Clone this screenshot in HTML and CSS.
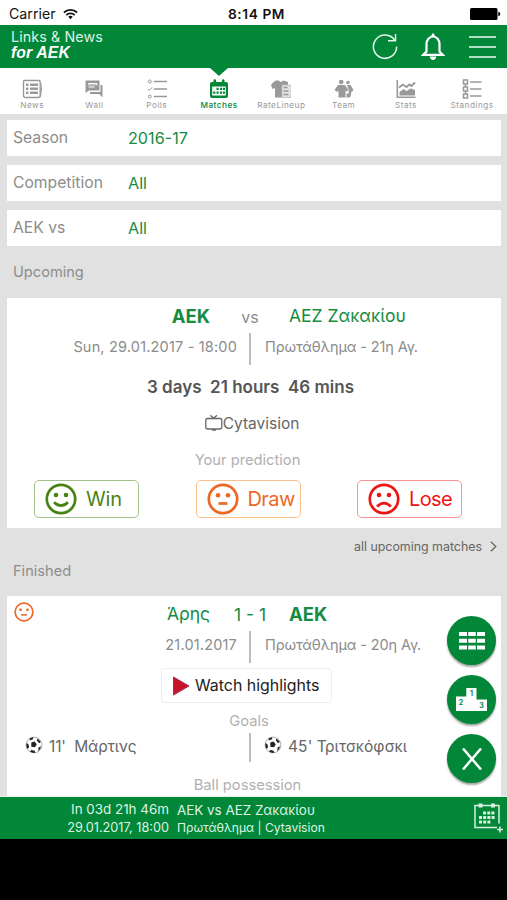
FILE: index.html
```html
<!DOCTYPE html>
<html lang="en">
<head>
<meta charset="utf-8">
<title>Links &amp; News for AEK</title>
<link rel="stylesheet" href="styles.css">
</head>
<body>
<div class="app">
  <div class="status">
    <div class="carrier"><span>Carrier</span>
      <svg width="15" height="12" viewBox="0 0 16 12" fill="none" stroke="#111" stroke-width="1.9"><path d="M1 4.400a10 10 0 0 1 14 0M3.500 7.100a6.400 6.400 0 0 1 9 0"/><path d="M5.600 9a3.600 3.600 0 0 1 4.800 0L8 11.700z" fill="#111" stroke="none"/></svg>
    </div>
    <div class="clock">8:14 PM</div>
    <svg class="battery" width="31" height="12" viewBox="0 0 31 12"><rect width="27.500" height="12" rx="1.500"/><path d="M28.300 3.800q2 .3 2 2.200t-2 2.200z"/></svg>
  </div>

  <header class="header">
    <div class="brand"><span class="brand-top">Links &amp; News</span><span class="brand-team">for AEK</span></div>
    <svg width="26" height="27" viewBox="0 0 26 27" fill="none" stroke="#e4f5e9" stroke-width="1.500"><path d="M22.800 7.500A11.600 11.600 0 1 0 24.600 13.600"/><path d="M23.500 1v6.800h-7.500"/></svg>
    <svg class="bell" width="24" height="29" viewBox="0 0 24 29"><path d="M5.500 19.500V12a6.500 7.500 0 0 1 13 0v7.500l3.300 3.400H2.200z" fill="none" stroke="#fff" stroke-width="2.200"/><path d="M9.500 4.500 12 .8l2.500 3.700zM8.800 24.500h6.400c0 2-1.500 3.500-3.200 3.500s-3.200-1.500-3.200-3.500z" fill="#fff"/></svg>
    <svg class="menu" width="27" height="24" viewBox="0 0 27 24" stroke="#effaf2" stroke-width="1.700"><path d="M0 2h27M0 12h27M0 22h27"/></svg>
  </header>

  <nav class="tabs">
    <div class="tab"><svg viewBox="0 0 20 20"><path d="M2.500 1.500h14.200a1.500 1.500 0 0 1 1.500 1.500v13.500a2 2 0 0 1-2 2H3.500a2 2 0 0 1-2-2v-14q0-1 1-1z" fill="none" stroke="currentColor" stroke-width="1.400"/><path d="M18.500 4.500l1.600 1-1.600 12" fill="none" stroke="currentColor"/><path d="M4 4.500h2.500V7H4zM8 4.500h8V7H8zM4 8.500h2.500V11H4zM8 8.500h8V11H8zM4 12.500h2.500V15H4zM8 12.500h8V15H8z" fill="currentColor"/></svg><span>News</span></div>
    <div class="tab"><svg viewBox="0 0 20 20"><path d="M2 1.500h13.500v10H5L1.500 14V2z" fill="currentColor"/><path d="M4.500 4.500h8.500v1.300H4.500zM4.500 8h6" stroke="#fff" stroke-width="1"/><path d="M16.500 6H18q.5 0 .5.600V18.500L15.200 15H6v-2h10.500z" fill="currentColor"/></svg><span>Wall</span></div>
    <div class="tab"><svg viewBox="0 0 20 20" fill="none" stroke="currentColor"><path d="M7.500 2.500h12M7.500 10h12M7.500 17.500h12" stroke-width="1.700" stroke-linecap="round"/><circle cx="2.800" cy="2.500" r="1.500"/><circle cx="2.800" cy="17.500" r="1.500"/><path d="M1 10l1.500 1.300L5 8.500"/></svg><span>Polls</span></div>
    <div class="tab active"><svg viewBox="0 0 20 20"><path d="M3 3h1.500V1.500a1.200 1.200 0 0 1 2.600 0V3h5.800V1.500a1.200 1.200 0 0 1 2.600 0V3h1.500a2 2 0 0 1 2 2v12a2 2 0 0 1-2 2H3a2 2 0 0 1-2-2V5a2 2 0 0 1 2-2z" fill="currentColor"/><path d="M3.200 7.500h13.600v9H3.200z" fill="#fff"/><path d="M7.500 8.800h2.200V11H7.500zM11 8.800h2.200V11H11zM14 8.800h2V11h-2zM4.200 12.500h2.200v2.200H4.200zM7.500 12.500h2.200v2.200H7.500zM11 12.500h2.200v2.200H11zM14 12.500h2v2.200h-2z" fill="currentColor"/></svg><span>Matches</span></div>
    <div class="tab"><svg viewBox="0 0 20 20"><path d="M5 1.500h2.500L10 3l2.500-1.500L17 3v3h-5v12.500H4V9L1.500 10 0 6q1.500-3 5-4.500z" fill="currentColor"/><path d="M11 6h8l1 1.500v11h-9z" fill="#e4e4e4" stroke="#bbb" stroke-width=".8"/><path d="M12.500 8.500h4M12.500 12h5M12.500 15.500h5" stroke="currentColor" stroke-width="1.500"/></svg><span>RateLineup</span></div>
    <div class="tab"><svg viewBox="0 0 20 20" fill="currentColor"><circle cx="7.200" cy="3" r="2.300"/><circle cx="14" cy="3.500" r="1.800"/><path d="M4 6h7l3.500 5-2 1.500-1-1V18.500H4.500V11.500l-1.500 1.500L.5 11z"/><path d="M13 6h3.500l3 5-1.800 2-.5-.5v2.500l-1.200 3.500H12.500v-4h2.200v-4z"/></svg><span>Team</span></div>
    <div class="tab"><svg viewBox="0 0 20 20"><path d="M1.300 1v17.300H19.500" fill="none" stroke="currentColor" stroke-width="1.600"/><path d="M3.500 13l4-3 3 2 4-2.500 4.500 1.500v5.500H3.500z" fill="currentColor"/><path d="M3 8.500l4-3L10.500 8l3-2.500 2 1.500L19 3.500" fill="none" stroke="currentColor" stroke-width="1.800"/></svg><span>Stats</span></div>
    <div class="tab"><svg viewBox="0 0 20 20" fill="none" stroke="currentColor"><path d="M8 3h11.500M8 10h11.500M8 17h11.500" stroke-width="1.500"/><path d="M1.500 1h4v4h-4zM1.500 8h4v4h-4zM1.500 15h4v4h-4zM3.500 5v3M3.500 12v3" stroke-width="1.600"/></svg><span>Standings</span></div>
  </nav>

  <main class="content">
    <div class="filter"><span class="key">Season</span><span class="value">2016-17</span></div>
    <div class="filter"><span class="key">Competition</span><span class="value">All</span></div>
    <div class="filter"><span class="key">AEK vs</span><span class="value">All</span></div>

    <h2 class="section">Upcoming</h2>
    <section class="card upcoming">
      <div class="teams"><b class="home">AEK</b><span class="versus">vs</span><span class="away">ΑΕΖ Ζακακίου</span></div>
      <div class="info"><span class="when">Sun, 29.01.2017 - 18:00</span><i class="rule"></i><span class="league">Πρωτάθλημα - 21η Αγ.</span></div>
      <div class="countdown">3 days&nbsp; 21 hours&nbsp; 46 mins</div>
      <div class="tv"><svg width="18" height="16" viewBox="0 0 18 16" fill="none" stroke="#666" stroke-width="1.300"><rect x=".8" y="3.500" width="16" height="10.500" rx="1.800"/><path d="M5.500.3l3 3L12 .3M7 15h4"/></svg><span>Cytavision</span></div>
      <div class="caption prediction">Your prediction</div>
      <div class="votes">
        <div class="vote win"><svg class="face" viewBox="0 0 32 32"><circle cx="16" cy="16" r="14.200"/><path d="M9 19.200q7 6.800 14 0"/><circle class="eye" cx="11" cy="12" r="2.300"/><circle class="eye" cx="21" cy="12" r="2.300"/></svg><span>Win</span></div>
        <div class="vote draw"><svg class="face" viewBox="0 0 32 32"><circle cx="16" cy="16" r="14.200"/><path d="M11.500 20.500h9"/><circle class="eye" cx="11" cy="12.300" r="2.300"/><circle class="eye" cx="21" cy="12.300" r="2.300"/></svg><span>Draw</span></div>
        <div class="vote lose"><svg class="face" viewBox="0 0 32 32"><circle cx="16" cy="16" r="14.200"/><path d="M9 23.500q7-6.800 14 0"/><circle class="eye" cx="11" cy="12" r="2.300"/><circle class="eye" cx="21" cy="12" r="2.300"/></svg><span>Lose</span></div>
      </div>
    </section>

    <div class="more"><span>all upcoming matches</span><svg width="7" height="11" viewBox="0 0 7 11" fill="none" stroke="#666" stroke-width="1.300"><path d="M.8.7l5 4.800-5 4.800"/></svg></div>
    <h2 class="section fin">Finished</h2>

    <section class="card finished">
      <svg class="face mini" viewBox="0 0 32 32"><circle cx="16" cy="16" r="14.200"/><path d="M11.500 20.500h9"/><circle class="eye" cx="10.500" cy="12.500" r="2.300"/><circle class="eye" cx="21.500" cy="12.500" r="2.300"/></svg>
      <div class="teams"><span class="home">Άρης</span><span class="score">1 - 1</span><b class="away">AEK</b></div>
      <div class="info"><span class="when">21.01.2017</span><i class="rule"></i><span class="league">Πρωτάθλημα - 20η Αγ.</span></div>
      <div class="watch"><svg width="18" height="20" viewBox="0 0 18 20"><path d="M1.500 1v18L17 10z" fill="#c8142b" stroke="#a5324a"/></svg><span>Watch highlights</span></div>
      <div class="caption goals-title">Goals</div>
      <div class="goals">
        <div class="goal"><svg class="ball" viewBox="0 0 18 18"><circle cx="9" cy="9" r="7.900" fill="#fff" stroke="#999" stroke-width=".8"/><path d="M6.300 6.500L9.500 5.500l2.300 2.800-1.800 3-3.700-.5zM4.500 2.400l3.500-1.100L8.300 3 5 4.500zM12.500 2.400l3.300 3.300-1.500 1.500-2.500-2.700zM1.300 7.500l1.900.3.900 3.200L2.800 13Q1 11 1.300 7.500zM6.200 14l3.500.8.400 2q-2.600.4-5-1.200zM13.500 11.500l2.500-1.300q0 2.200-2.700 5z" fill="#222"/></svg><span class="martins">11'&nbsp; Μάρτινς</span></div>
        <i class="rule"></i>
        <div class="goal guest"><svg class="ball" viewBox="0 0 18 18"><circle cx="9" cy="9" r="7.900" fill="#fff" stroke="#999" stroke-width=".8"/><path d="M6.300 6.500L9.500 5.500l2.300 2.800-1.800 3-3.700-.5zM4.500 2.400l3.500-1.100L8.300 3 5 4.500zM12.500 2.400l3.300 3.300-1.500 1.500-2.500-2.700zM1.300 7.500l1.900.3.900 3.200L2.800 13Q1 11 1.300 7.500zM6.200 14l3.500.8.400 2q-2.600.4-5-1.200zM13.500 11.500l2.500-1.300q0 2.200-2.700 5z" fill="#222"/></svg><span class="trick">45' Τριτσκόφσκι</span></div>
      </div>
      <div class="caption possession">Ball possession</div>
    </section>
  </main>

  <footer class="footer">
    <div class="next-time"><span class="in">In 03d 21h 46m</span><span class="date">29.01.2017, 18:00</span></div>
    <div class="next-match"><span class="pair">AEK vs ΑΕΖ Ζακακίου</span><span class="where">Πρωτάθλημα | Cytavision</span></div>
    <svg class="calendar" width="32" height="32" viewBox="0 0 32 32" fill="none" stroke="#d9f0df" stroke-width="1.500"><path d="M27 22.500V4.500H3v22h22M28 25.500v6M25 28.500h6"/><path d="M6.500 4.500h4M19 4.500h4" stroke-width="4"/><path d="M11 12h3m1.200 0h3m1.200 0h3M7 16.500h3m1.200 0h3m1.200 0h3m1.200 0h3M7 21h3m1.200 0h3m1.200 0h3" stroke-width="3"/></svg>
  </footer>

  <div class="fabs">
    <div class="fab"><svg width="26" height="18" viewBox="0 0 26 18" fill="#fff"><path d="M0 0h8v4H0zM9.200 0h7.600v4H9.200zM18 0h8v4h-8zM0 6.700h8v4H0zM9.200 6.700h7.600v4H9.200zM18 6.700h8v4h-8zM0 13.400h8v4H0zM9.200 13.400h7.600v4H9.200zM18 13.400h8v4h-8z"/></svg></div>
    <div class="fab"><svg width="31" height="23" viewBox="0 0 31 23"><path d="M0 8.500h10.300V0h10.200v11.500H31V23H0z" fill="#fff"/><g class="podium"><text x="5" y="17">2</text><text x="15.500" y="8">1</text><text x="25.500" y="20">3</text></g></svg></div>
    <div class="fab"><svg width="20" height="22" viewBox="0 0 20 22" stroke="#fff" stroke-width="2.500"><path d="M1 .5l18 21M19 .5L1 21.500"/></svg></div>
  </div>
</div>
</body>
</html>
```

FILE: styles.css
```css
* { box-sizing: border-box; }
body { margin: 0; background: #000; font-family: Inter, "Liberation Sans", sans-serif; color: #8c8c8c; }
.app { position: relative; width: 507px; height: 900px; overflow: hidden; display: flex; flex-direction: column; }
span, b, .clock, .countdown, .caption, h2 { white-space: nowrap; }
svg { flex: none; display: block; }

.status { height: 25px; background: #fff; display: grid; grid-template-columns: 1fr auto 1fr; align-items: center; padding: 2px 6px 0 9px; color: #111; }
.carrier { display: flex; align-items: center; gap: 7px; font-size: 14.2px; }
.clock { font-size: 13.7px; font-weight: 600; letter-spacing: .6px; padding-left: 3px; }
.battery { justify-self: end; }

.header { height: 43px; background: #028739; display: flex; align-items: center; padding: 0 11px; }
.brand { flex: 1; display: flex; flex-direction: column; color: #fff; padding-bottom: 2px; }
.brand-top { font-size: 14.3px; line-height: 14px; color: #dff3e5; letter-spacing: .1px; }
.brand-team { font: italic bold 15.8px/18px "Liberation Sans", sans-serif; letter-spacing: .1px; }
.bell { margin-left: 23px; }
.menu { margin-left: 24px; }

.tabs { position: relative; height: 46px; background: #fff; display: grid; grid-template-columns: repeat(7, 62.300px) 1fr; padding-left: 1px; }
.tab { display: flex; flex-direction: column; align-items: center; padding-top: 11px; color: #999; font-size: 8.2px; letter-spacing: .5px; line-height: 13px; }
.tab svg { width: 20px; height: 20px; }
.tab.active { color: #028739; }
.tab.active span { font-weight: 500; }
.tab.active::before { content: ""; position: absolute; top: 0; left: 210px; border: 9px solid transparent; border-top: 8px solid #028739; border-bottom: 0; }

.content { height: 682px; background: #e1e1e1; padding: 6px 6px 0 7px; overflow: hidden; }
.filter { height: 36px; background: #fff; margin-bottom: 9px; padding-left: 6px; display: grid; grid-template-columns: 115px 1fr; line-height: 35px; font-size: 15.7px; }
.value { color: #158c42; font-size: 16.2px; line-height: 36px; }
.section { margin: 0; padding-left: 6px; font-weight: 400; font-size: 14.6px; line-height: 34px; height: 43px; }
.card { background: #fff; }
.upcoming { height: 230px; }
.teams { height: 35px; display: grid; grid-template-columns: 203px 79px 1fr; align-items: center; font-size: 17.5px; padding-top: 0; }
.home, .away { color: #158c42; }
b { font-weight: 700; color: #028739; font-size: 18.400px; }
.home { justify-self: end; }
.versus, .score { justify-self: center; padding-left: 1px; padding-top: 2px; }
.versus { font-size: 16px; }
.score { color: #158c42; }
.info { height: 32px; display: grid; grid-template-columns: 230px 28px 1fr; align-items: center; font-size: 14.5px; }
.when { justify-self: end; padding-bottom: 6px; letter-spacing: .18px; }
.league { padding-bottom: 6px; letter-spacing: -.12px; }
.rule { width: 2px; height: 32px; background: #bdbdbd; justify-self: center; margin-right: 3px; }
.countdown { text-align: center; padding-right: 7px; font-size: 17px; font-weight: 600; color: #555; line-height: 45px; height: 44px; }
.tv { height: 28px; display: flex; align-items: center; justify-content: center; padding-right: 4px; font-size: 15.5px; color: #666; }
.caption { text-align: center; color: #b0b0b0; font-size: 14.7px; padding-right: 13px; }
.prediction { line-height: 46px; height: 43px; }
.votes { display: grid; grid-template-columns: repeat(3, 105px); column-gap: 56.500px; padding-left: 27px; }
.vote { height: 38px; border: 1px solid; border-radius: 5px; display: flex; align-items: center; padding-left: 10px; gap: 9px; font-size: 20px; letter-spacing: -.6px; }
.face { width: 32px; height: 32px; margin-top: -1px; fill: none; stroke: currentColor; stroke-width: 2.7; }
.face .eye { fill: currentColor; stroke: none; }
.win { color: #498315; border-color: #a4c18b; letter-spacing: -.2px; }
.draw { color: #ed6826; border-color: #fac18c; }
.lose { color: #f01515; border-color: #fa9292; }
.more { height: 37px; display: flex; justify-content: flex-end; align-items: center; gap: 8px; padding-right: 4px; color: #666; font-size: 12.4px; }
.fin { height: 31px; line-height: 12px; }
.finished { height: 200px; position: relative; }
.mini { position: absolute; left: 7px; top: 6px; margin: 0; width: 20px; height: 20px; color: #ed6826; }
.watch { width: 171px; height: 35px; margin: 5px 0 0 154px; border: 1px solid #eee; border-radius: 4px; display: flex; align-items: center; gap: 5px; padding-left: 10px; color: #222; font-size: 15.9px; }
.goals-title { line-height: 36px; height: 30px; padding-right: 10px; }
.goals { height: 29px; display: grid; grid-template-columns: 230px 28px 1fr; align-items: center; font-size: 15.5px; color: #666; }
.goals .rule { height: 29px; }
.goal { display: flex; align-items: center; gap: 6px; padding: 0 0 3px 18px; }
.martins { letter-spacing: -.15px; }
.trick { letter-spacing: .1px; }
.guest { padding-left: 0; margin-left: -1px; }
.ball { width: 18px; height: 18px; margin-bottom: 2px; }
.possession { line-height: 47px; }

.footer { height: 43px; background: #028739; border-top: 1px solid #e8f5ec; display: grid; grid-template-columns: 169px 295px 32px; column-gap: 4px; color: #dff3e5; padding-top: 3px; }
.next-time, .next-match { display: flex; flex-direction: column; line-height: 18px; font-size: 13.4px; }
.next-time { align-items: flex-end; }
.next-match { padding: 1px 0 0 4px; }
.date { font-size: 12.7px; line-height: 20px; }
.where { font-size: 12.1px; }
.calendar { margin-top: 1px; }

.fabs { position: absolute; left: 447px; top: 616px; display: grid; gap: 10px; }
.fab { width: 49px; height: 49px; border-radius: 50%; background: #028739; display: grid; place-items: center; box-shadow: 0 2px 2px rgba(0,0,0,.35); }
.podium { fill: #028739; font: bold 7px Inter, sans-serif; text-anchor: middle; }
```
